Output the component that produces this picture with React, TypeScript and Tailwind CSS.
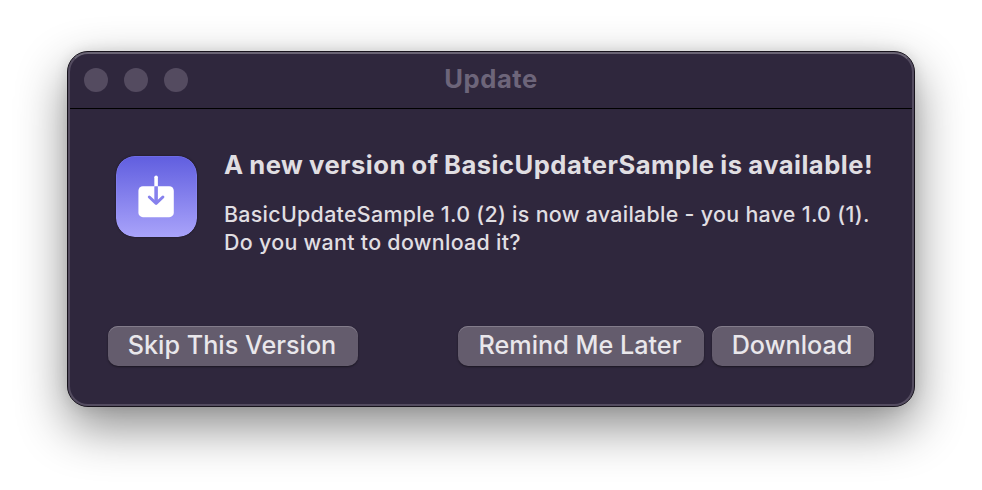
import type { ReactNode } from "react";

function PushButton({ className, children }: { className: string; children: ReactNode }) {
  return (
    <button
      className={`flex h-10 items-center justify-center whitespace-nowrap rounded-[10px] bg-[#645c6d] pr-[2px] text-[25.2px] font-[450] leading-none text-[#e9e7eb] shadow-[inset_0_1px_0_#837c8b,0_1px_2px_rgba(0,0,0,0.45)] ${className}`}
    >
      {children}
    </button>
  );
}

function AppIcon() {
  return (
    <svg width="81" height="81" viewBox="0 0 82 82" className="mt-[0.5px] shrink-0 rounded-[19px] shadow-[0_0_2px_rgba(0,0,0,0.5)]">
      <defs>
        <linearGradient id="tile" x1="0" y1="0" x2="0" y2="1">
          <stop offset="0" stopColor="#605edf" />
          <stop offset="1" stopColor="#a9a3fa" />
        </linearGradient>
      </defs>
      <rect width="82" height="82" rx="19" fill="url(#tile)" />
      <rect x="0.5" y="0.5" width="81" height="81" rx="18.5" fill="none" stroke="#aaa4ff" strokeOpacity="0.2" />
      <rect x="22.7" y="30.6" width="35.8" height="31.3" rx="4.5" fill="#fff" />
      <path d="M40.6 21.6V30.6" stroke="#fff" strokeWidth="3.6" strokeLinecap="round" />
      <path d="M33.7 41.5L40.6 48L47.5 41.5" fill="none" stroke="#8681ed" strokeWidth="3" strokeLinecap="round" strokeLinejoin="round" />
      <path d="M40.6 30.6V47.3" stroke="#8681ed" strokeWidth="3.6" />
    </svg>
  );
}

export default function App() {
  return (
    <main className="h-[490px] w-[982px] overflow-hidden bg-white pl-[67px] pt-[51px] font-['Inter','Liberation_Sans',sans-serif]">
      <section className="h-[356px] w-[848px] rounded-[21px] border border-[#17131c] bg-[#2f273d] shadow-[0_20px_50px_rgba(0,0,0,0.46),0_0_14px_rgba(0,0,0,0.1)]">
        <div className="flex h-full flex-col rounded-[20px] border-2 border-t-[#6a6474] border-x-[#544c60] border-b-[#544c60]">
          <header className="grid h-[55px] shrink-0 grid-cols-[1fr_auto_1fr] items-center border-b border-black pb-[2px] pl-[14px]">
            <div className="flex gap-4">
              <span className="size-6 rounded-full bg-[#544b60]" />
              <span className="size-6 rounded-full bg-[#544b60]" />
              <span className="size-6 rounded-full bg-[#544b60]" />
            </div>
            <h1 className="-ml-[14px] -mt-[2px] text-[25.6px] font-bold leading-none tracking-[0.55px] text-[#6d657a]">Update</h1>
          </header>
          <div className="flex pl-[45.5px] pt-[46px]">
            <AppIcon />
            <div className="ml-[27.5px] whitespace-nowrap text-[#e0dee2]">
              <h2 className="-mt-[6px] text-[25.6px] font-bold leading-8 tracking-[0.47px] [word-spacing:-0.8px]">
                A new version of BasicUpdaterSample is available!
              </h2>
              <p className="mt-[19px] text-[21.4px] font-[450] leading-7 tracking-[0.3px]">
                <span className="block">BasicUpdateSample 1.0 (2) is now available - you have 1.0 (1).</span>
                <span className="block">Do you want to download it?</span>
              </p>
            </div>
          </div>
          <footer className="mb-[38px] ml-[38px] mr-[38px] mt-auto flex">
            <PushButton className="w-[250px]">Skip This Version</PushButton>
            <PushButton className="ml-auto w-[246px]">Remind Me Later</PushButton>
            <PushButton className="ml-2 w-[162px]">Download</PushButton>
          </footer>
        </div>
      </section>
    </main>
  );
}
